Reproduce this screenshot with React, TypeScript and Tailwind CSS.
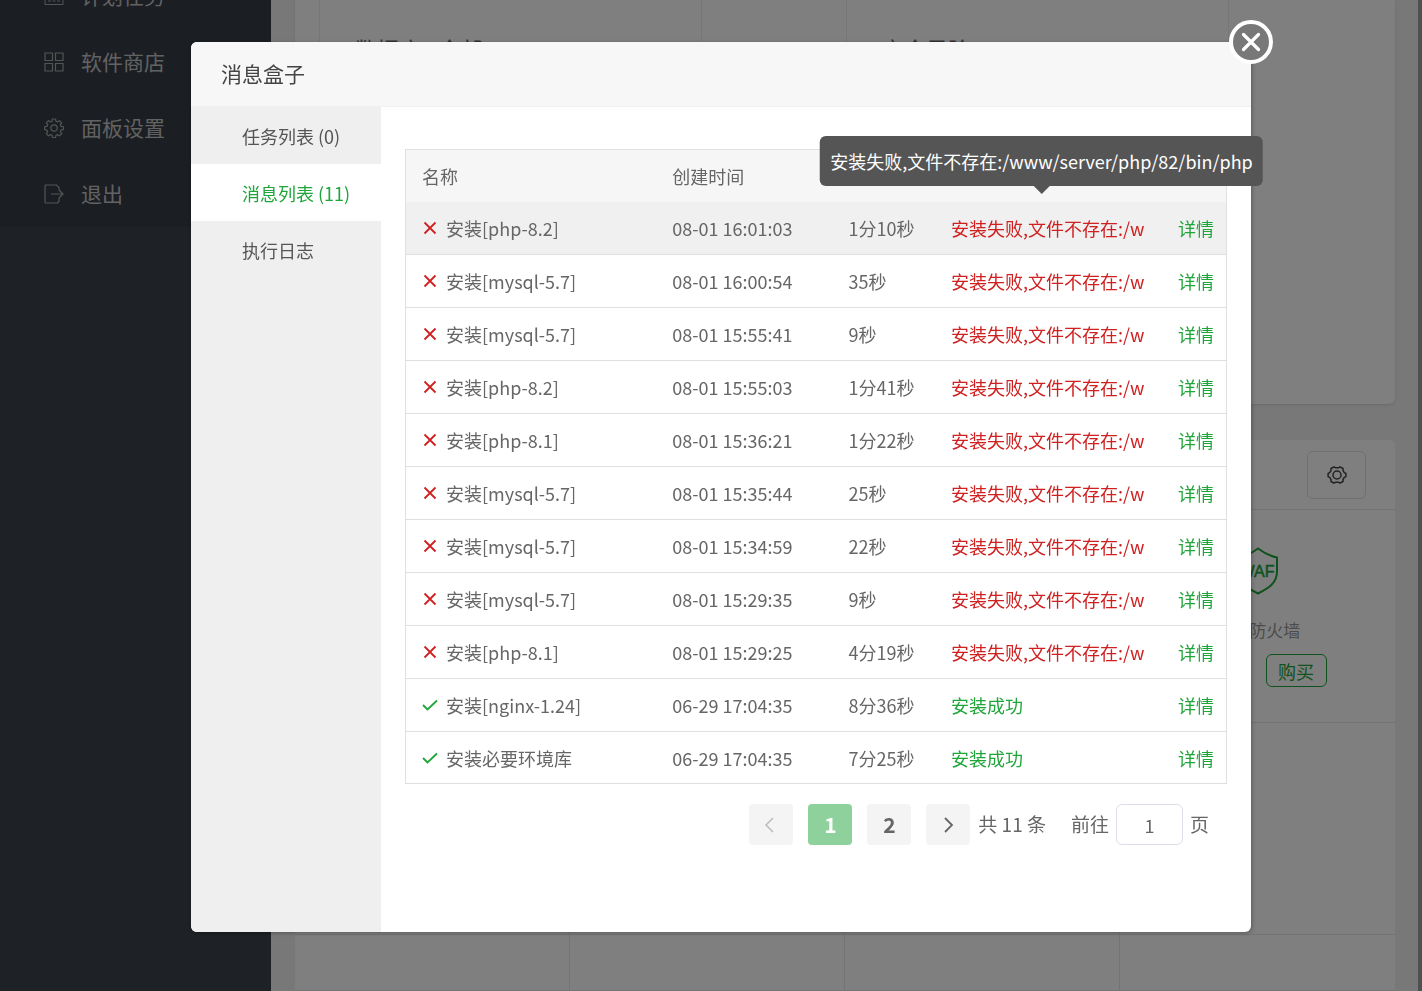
import { useState } from 'react';

type Message = {
  name: string;
  createdAt: string;
  duration: string;
  ok: boolean;
};

const FAIL_TEXT = '安装失败,文件不存在:/www/server/php/82/bin/php';

const MESSAGES: Message[] = [
  { name: '安装[php-8.2]', createdAt: '08-01 16:01:03', duration: '1分10秒', ok: false },
  { name: '安装[mysql-5.7]', createdAt: '08-01 16:00:54', duration: '35秒', ok: false },
  { name: '安装[mysql-5.7]', createdAt: '08-01 15:55:41', duration: '9秒', ok: false },
  { name: '安装[php-8.2]', createdAt: '08-01 15:55:03', duration: '1分41秒', ok: false },
  { name: '安装[php-8.1]', createdAt: '08-01 15:36:21', duration: '1分22秒', ok: false },
  { name: '安装[mysql-5.7]', createdAt: '08-01 15:35:44', duration: '25秒', ok: false },
  { name: '安装[mysql-5.7]', createdAt: '08-01 15:34:59', duration: '22秒', ok: false },
  { name: '安装[mysql-5.7]', createdAt: '08-01 15:29:35', duration: '9秒', ok: false },
  { name: '安装[php-8.1]', createdAt: '08-01 15:29:25', duration: '4分19秒', ok: false },
  { name: '安装[nginx-1.24]', createdAt: '06-29 17:04:35', duration: '8分36秒', ok: true },
  { name: '安装必要环境库', createdAt: '06-29 17:04:35', duration: '7分25秒', ok: true },
];

const TABS = ['任务列表 (0)', '消息列表 (11)', '执行日志'];

function CalendarIcon() {
  return (
    <svg width="20" height="20" viewBox="0 0 20 20" fill="none" stroke="currentColor">
      <path d="M1 3.5h18v15H1zM1 7.5h18M6 1v4M14 1v4M4 15h3M8.5 15h3M13 15h3M4 11.5h3M8.5 11.5h3M13 11.5h3" />
    </svg>
  );
}

function GridIcon() {
  return (
    <svg width="20" height="20" viewBox="0 0 20 20" fill="none" stroke="currentColor" strokeWidth="1.2">
      <path d="M1 1h7.5v7.5H1zM11.5 1H19v7.5h-7.5zM1 11.5h7.5V19H1zM11.5 11.5H19V19h-7.5z" />
    </svg>
  );
}

function CogIcon() {
  return (
    <svg width="20" height="20" viewBox="0 0 20 20" fill="none" stroke="currentColor" strokeWidth="1.2" strokeLinejoin="round">
      <path d="M8.4 1h3.2l.4 2.3 1.6.7 2-1.4 2.1 2.2-1.3 1.9.7 1.7 2.2.3v3l-2.200.4-.7 1.7 1.3 1.9-2.1 2.2-2-1.3-1.6.6-.4 2.3H8.4L8 17.200l-1.6-.6-2 1.3-2.1-2.2 1.3-1.9-.7-1.7-2.2-.4v-3l2.2-.3.7-1.7-1.3-1.9 2.1-2.2 2 1.400L8 3.3z" />
      <circle cx="10" cy="10" r="3.2" />
    </svg>
  );
}

function ExitIcon() {
  return (
    <svg width="20" height="20" viewBox="0 0 20 20" fill="none" stroke="currentColor" strokeWidth="1.2">
      <path d="M15 6V3.5L12.5 1H2a1 1 0 0 0-1 1v16a1 1 0 0 0 1 1h11.5l1.5-1.5V14M7 10h12M15 6l4 4-4 4" />
    </svg>
  );
}

function HexGearIcon() {
  return (
    <svg width="20" height="20" viewBox="0 0 20 20" fill="none" stroke="currentColor" strokeWidth="1.5" strokeLinejoin="round">
      <path d="M7 1.8l1.7 1h2.6l1.7-1 3 1.7v2l1.3 2.2 1.6.8v3l-1.6.8L16 14.500v2l-3 1.7-1.7-1H8.700l-1.7 1-3-1.7v-2l-1.3-2.2-1.6-.8v-3l1.6-.8L4 5.500v-2z" />
      <circle cx="10" cy="10" r="4" />
    </svg>
  );
}

const MENU = [
  { label: '计划任务', Icon: CalendarIcon },
  { label: '软件商店', Icon: GridIcon },
  { label: '面板设置', Icon: CogIcon },
  { label: '退出', Icon: ExitIcon },
];

function Sidebar() {
  return (
    <aside className="w-[271px] shrink-0 bg-[#3c424a]">
      <nav className="flex h-[227px] flex-col justify-end overflow-hidden bg-[#363c44]">
        {MENU.map(({ label, Icon }) => (
          <a key={label} href="#" className="flex h-[66px] shrink-0 items-center gap-[17px] pl-11 text-[#a8a8a8]">
            <Icon />
            <span className="text-[21px] text-[#c4c4c4]">{label}</span>
          </a>
        ))}
      </nav>
    </aside>
  );
}

function Dashboard() {
  return (
    <main className="flex flex-1 flex-col gap-9 border-r-4 border-[#a0a0a0] bg-[#f0f0f0] pr-[23px] pl-6">
      <section className="flex h-[404px] shrink-0 gap-36 rounded-b-md bg-white pl-6 shadow-sm">
        <div className="h-[150px] w-[383px] border-x border-[#efefef] px-[35px] pt-8 text-[22px] text-[#666]">数据库 - 全部</div>
        <div className="h-[150px] w-[383px] border-x border-[#efefef] px-[35px] pt-8 text-[22px] text-[#666]">安全风险</div>
      </section>

      <section className="flex flex-1 flex-col rounded-t-md bg-white">
        <div className="flex h-[70px] shrink-0 items-center justify-end border-b border-[#e6e8ee] pr-[29px]">
          <button aria-label="设置" className="flex h-12 w-[59px] items-center justify-center rounded-md border border-[#dcdfe6] text-[#444]">
            <HexGearIcon />
          </button>
        </div>
        <div className="grid flex-1 grid-cols-4 grid-rows-[213px_212px_1fr]">
          {Array.from({ length: 12 }, (_, i) => (
            <div key={i} className="flex flex-col items-center border-b border-[#e6e8ee] not-nth-[4n]:border-r">
              {i === 3 && <FirewallApp />}
            </div>
          ))}
        </div>
      </section>
    </main>
  );
}

function FirewallApp() {
  return (
    <>
      <svg className="mt-[37px]" width="42" height="48" viewBox="0 0 42 48" fill="none" stroke="#20a53a" strokeWidth="2">
        <path d="M21 1.500C15 6 9 9 2 10.500v14C2 36 10 41 21 46.500 32 41 40 36 40 24.500v-14C33 9 27 6 21 1.500z" />
        <text x="20" y="30" textAnchor="middle" fontSize="16" fill="#20a53a" strokeWidth="0.5" fontFamily="Liberation Sans, sans-serif">WAF</text>
      </svg>
      <p className="mt-[23px] text-[17px] leading-6 text-[#999]">WAF防火墙</p>
      <div className="mt-3 flex gap-4 text-lg text-[#20a53a]">
        <button className="h-[33px] w-[61px] rounded-md border border-[#20a53a] leading-none">预览</button>
        <button className="h-[33px] w-[61px] rounded-md border border-[#20a53a] leading-none">购买</button>
      </div>
    </>
  );
}

function StatusIcon({ ok }: { ok: boolean }) {
  return ok ? (
    <svg width="16" height="16" viewBox="0 0 16 16" fill="none" stroke="#20a53a" strokeWidth="1.8">
      <path d="M1 8l4.5 4.5L15 3.5" />
    </svg>
  ) : (
    <svg width="16" height="16" viewBox="0 0 16 16" fill="none" stroke="#d02020" strokeWidth="1.8">
      <path d="M2.5 2.5l11 11M13.5 2.5l-11 11" />
    </svg>
  );
}

function MessageTable() {
  return (
    <table className="h-[635px] w-full table-fixed border-separate border-spacing-0 border border-[#e0e0e0] text-left text-lg leading-6 text-[#666]">
      <colgroup>
        <col className="w-[31%]" />
        <col className="w-[21.5%]" />
        <col className="w-[12.5%]" />
        <col className="w-[25%]" />
        <col className="w-[10%]" />
      </colgroup>
      <thead className="bg-[#f6f6f6]">
        <tr className="h-[52px]">
          <th className="pl-4 font-normal">名称</th>
          <th className="pl-3 font-normal">创建时间</th>
          <th className="pl-3 font-normal">耗时</th>
          <th className="pl-3 font-normal">结果</th>
          <th className="pr-3 text-right font-normal">操作</th>
        </tr>
      </thead>
      <tbody>
        {MESSAGES.map((m, i) => (
          <tr key={i} className="first:bg-[#f0f0f0] [&:not(:last-child)>td]:border-b [&>td]:border-[#e0e0e0]">
            <td className="pl-4">
              <div className="flex items-center gap-2">
                <StatusIcon ok={m.ok} />
                {m.name}
              </div>
            </td>
            <td className="pl-3">{m.createdAt}</td>
            <td className="pl-3">{m.duration}</td>
            <td className="relative pl-3">
              <div className={m.ok ? 'text-[#20a53a]' : 'overflow-hidden whitespace-nowrap text-[#d02020]'}>
                {m.ok ? '安装成功' : FAIL_TEXT}
              </div>
              {i === 0 && <Tooltip text={FAIL_TEXT} />}
            </td>
            <td className="pr-3 text-right">
              <a href="#" className="text-[#20a53a]">详情</a>
            </td>
          </tr>
        ))}
      </tbody>
    </table>
  );
}

function Tooltip({ text }: { text: string }) {
  return (
    <div role="tooltip" className="absolute bottom-full left-1/2 mb-4 flex h-[50px] -translate-x-1/2 items-center rounded-md bg-[#555] px-[10px] whitespace-nowrap text-white">
      {text}
      <span className="absolute top-full left-1/2 -translate-x-1/2 border-x-8 border-t-8 border-x-transparent border-t-[#555]" />
    </div>
  );
}

function Pagination() {
  const [page, setPage] = useState(1);

  return (
    <div className="mt-5 flex items-center justify-end pr-[18px] text-[19px] text-[#666]">
      <div className="flex gap-[15px]">
        <button aria-label="上一页" className="flex h-[41px] w-11 items-center justify-center rounded-sm bg-[#f4f4f5] text-[#bbb]">
          <svg width="20" height="20" viewBox="0 0 20 20" fill="none" stroke="currentColor" strokeWidth="1.5">
            <path d="M12 3l-7 7 7 7" />
          </svg>
        </button>
        {[1, 2].map(n => (
          <button key={n} onClick={() => setPage(n)}
            className={`h-[41px] w-11 rounded-sm text-[21px] font-bold ${n === page ? 'bg-[#8fd19c] text-white' : 'bg-[#f4f4f5]'}`}>
            {n}
          </button>
        ))}
        <button aria-label="下一页" className="flex h-[41px] w-11 items-center justify-center rounded-sm bg-[#f4f4f5]">
          <svg width="20" height="20" viewBox="0 0 20 20" fill="none" stroke="currentColor" strokeWidth="1.8">
            <path d="M7 3l7 7-7 7" />
          </svg>
        </button>
      </div>
      <span className="ml-2">共 11 条</span>
      <label className="ml-[25px] flex items-center gap-[7px]">
        前往
        <input defaultValue="1" className="h-[41px] w-[67px] rounded-md border border-[#dcdfe6] text-center text-lg" />
        页
      </label>
    </div>
  );
}

function MessageBox() {
  const [tab, setTab] = useState(1);

  return (
    <div role="dialog" aria-label="消息盒子" className="relative flex flex-1 flex-col rounded-md bg-white shadow-[1px_1px_4px_rgba(0,0,0,0.3)]">
      <header className="flex h-[65px] shrink-0 items-center rounded-t-md border-b border-[#f0f0f0] bg-[#f7f7f7] pl-[30px] text-[21px] text-[#444]">
        消息盒子
      </header>
      <button aria-label="关闭" className="absolute -top-[22px] -right-[22px] flex size-11 items-center justify-center rounded-full border-4 border-white bg-[#787878] text-white">
        <svg width="20" height="20" viewBox="0 0 20 20" fill="none" stroke="currentColor" strokeWidth="3.2" strokeLinecap="round">
          <path d="M2.5 2.5l15 15M17.5 2.5l-15 15" />
        </svg>
      </button>
      <div className="flex flex-1">
        <nav className="flex w-[190px] shrink-0 flex-col rounded-bl-md bg-[#efefef] text-lg text-[#555]">
          {TABS.map((t, i) => (
            <button key={t} onClick={() => setTab(i)}
              className={`h-[57px] pl-[51px] text-left ${i === tab ? 'bg-white text-[#20a53a]' : ''}`}>
              {t}
            </button>
          ))}
        </nav>
        <div className="min-w-0 flex-1 px-6 pt-[42px]">
          <MessageTable />
          <Pagination />
        </div>
      </div>
    </div>
  );
}

export default function App() {
  return (
    <div className="flex h-screen overflow-hidden font-['Noto_Sans_CJK_SC',sans-serif]">
      <Sidebar />
      <Dashboard />
      <div className="fixed inset-0 flex bg-black/50 pt-[42px] pr-[171px] pb-[59px] pl-[191px]">
        <MessageBox />
      </div>
    </div>
  );
}
